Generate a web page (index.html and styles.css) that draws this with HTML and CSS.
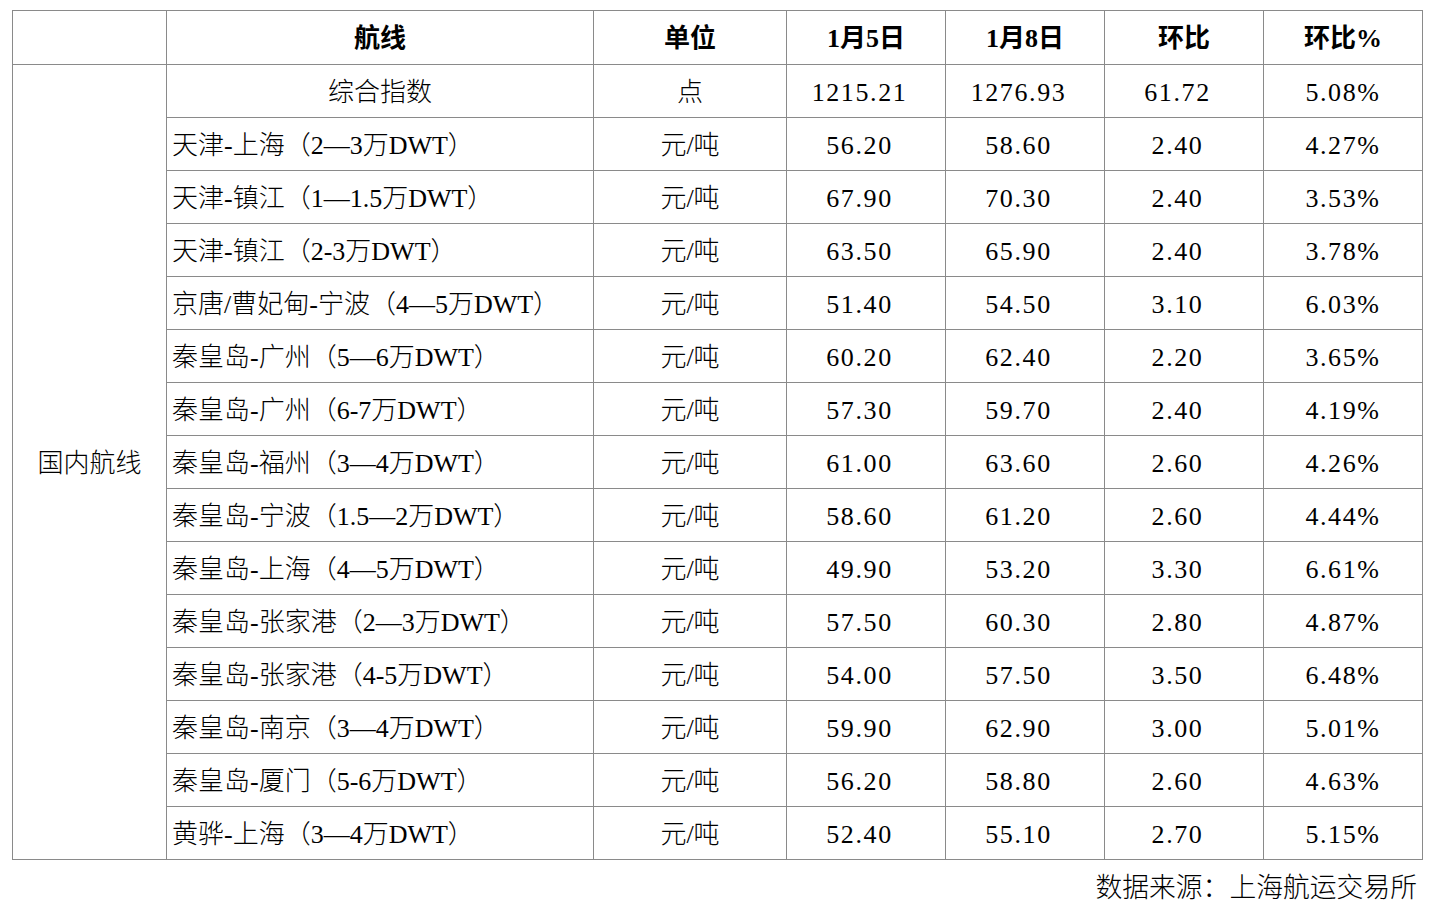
FILE: index.html
```html
<!DOCTYPE html>
<html lang="zh-CN">
<head>
<meta charset="utf-8">
<title>航线运价</title>
<link rel="stylesheet" href="styles.css">
</head>
<body>
<div class="page">
<table class="freight">
  <colgroup>
    <col class="c-group"><col class="c-route"><col class="c-unit"><col class="c-num"><col class="c-num"><col class="c-num"><col class="c-num">
  </colgroup>
  <thead>
    <tr class="head">
      <th></th><th>航线</th><th>单位</th><th>1月5日</th><th>1月8日</th><th>环比</th><th>环比%</th>
    </tr>
  </thead>
  <tbody>
    <tr><td class="group" rowspan="15">国内航线</td><td class="center">综合指数</td><td class="center">点</td><td class="n s">1215.21</td><td class="n s">1276.93</td><td class="n s">61.72</td><td class="n">5.08%</td></tr>
    <tr><td class="route">天津-上海（2—3万DWT）</td><td class="center">元/吨</td><td class="n s">56.20</td><td class="n s">58.60</td><td class="n s">2.40</td><td class="n">4.27%</td></tr>
    <tr><td class="route">天津-镇江（1—1.5万DWT）</td><td class="center">元/吨</td><td class="n s">67.90</td><td class="n s">70.30</td><td class="n s">2.40</td><td class="n">3.53%</td></tr>
    <tr><td class="route">天津-镇江（2-3万DWT）</td><td class="center">元/吨</td><td class="n s">63.50</td><td class="n s">65.90</td><td class="n s">2.40</td><td class="n">3.78%</td></tr>
    <tr><td class="route">京唐/曹妃甸-宁波（4—5万DWT）</td><td class="center">元/吨</td><td class="n s">51.40</td><td class="n s">54.50</td><td class="n s">3.10</td><td class="n">6.03%</td></tr>
    <tr><td class="route">秦皇岛-广州（5—6万DWT）</td><td class="center">元/吨</td><td class="n s">60.20</td><td class="n s">62.40</td><td class="n s">2.20</td><td class="n">3.65%</td></tr>
    <tr><td class="route">秦皇岛-广州（6-7万DWT）</td><td class="center">元/吨</td><td class="n s">57.30</td><td class="n s">59.70</td><td class="n s">2.40</td><td class="n">4.19%</td></tr>
    <tr><td class="route">秦皇岛-福州（3—4万DWT）</td><td class="center">元/吨</td><td class="n s">61.00</td><td class="n s">63.60</td><td class="n s">2.60</td><td class="n">4.26%</td></tr>
    <tr><td class="route">秦皇岛-宁波（1.5—2万DWT）</td><td class="center">元/吨</td><td class="n s">58.60</td><td class="n s">61.20</td><td class="n s">2.60</td><td class="n">4.44%</td></tr>
    <tr><td class="route">秦皇岛-上海（4—5万DWT）</td><td class="center">元/吨</td><td class="n s">49.90</td><td class="n s">53.20</td><td class="n s">3.30</td><td class="n">6.61%</td></tr>
    <tr><td class="route">秦皇岛-张家港（2—3万DWT）</td><td class="center">元/吨</td><td class="n s">57.50</td><td class="n s">60.30</td><td class="n s">2.80</td><td class="n">4.87%</td></tr>
    <tr><td class="route">秦皇岛-张家港（4-5万DWT）</td><td class="center">元/吨</td><td class="n s">54.00</td><td class="n s">57.50</td><td class="n s">3.50</td><td class="n">6.48%</td></tr>
    <tr><td class="route">秦皇岛-南京（3—4万DWT）</td><td class="center">元/吨</td><td class="n s">59.90</td><td class="n s">62.90</td><td class="n s">3.00</td><td class="n">5.01%</td></tr>
    <tr><td class="route">秦皇岛-厦门（5-6万DWT）</td><td class="center">元/吨</td><td class="n s">56.20</td><td class="n s">58.80</td><td class="n s">2.60</td><td class="n">4.63%</td></tr>
    <tr><td class="route">黄骅-上海（3—4万DWT）</td><td class="center">元/吨</td><td class="n s">52.40</td><td class="n s">55.10</td><td class="n s">2.70</td><td class="n">5.15%</td></tr>
  </tbody>
</table>
<p class="source">数据来源：上海航运交易所</p>
</div>
</body>
</html>
```
FILE: styles.css
```css
html, body {
  margin: 0;
  padding: 0;
  background: #ffffff;
}
body {
  font-family: "Liberation Serif", "Noto Sans CJK SC", serif;
  font-size: 26px;
  font-weight: 300;
  color: #000000;
}
.page {
  padding: 10px 9px 0 12px;
}
.freight {
  border-collapse: collapse;
  table-layout: fixed;
  width: 1411px;
}
.c-group { width: 154px; }
.c-route { width: 427px; }
.c-unit { width: 193px; }
.c-num { width: 159px; }
.freight th,
.freight td {
  border: 1px solid #8a8a8a;
  height: 52px;
  padding: 3px 0 0 0;
  box-sizing: border-box;
  text-align: center;
  vertical-align: middle;
  white-space: nowrap;
  line-height: 1;
  font-weight: 300;
}
.freight td {
  height: 53px;
}
.freight .head th {
  height: 54px;
  font-weight: 700;
}
.freight td.route {
  text-align: left;
  padding-left: 5px;
}
.freight td.n {
  letter-spacing: 1.6px;
}
.freight td.s {
  padding-right: 13px;
}
.source {
  margin: 13px 5px 0 0;
  text-align: right;
  font-size: 26.8px;
  line-height: 30px;
}
```
